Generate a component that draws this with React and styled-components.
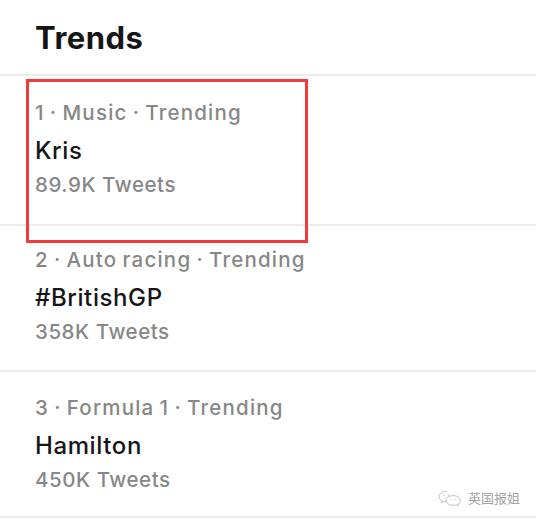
import React from "react";
import styled, { createGlobalStyle } from "styled-components";

const Global = createGlobalStyle`
  html, body { margin: 0; padding: 0; background: #ffffff; }
  body { font-family: Inter, "Noto Sans", "Liberation Sans", sans-serif; -webkit-font-smoothing: antialiased; }
`;

const Page = styled.div`
  width: 536px;
  height: 522px;
  background: #fff;
  overflow: hidden;
  position: relative;
`;

const Header = styled.div`
  height: 76px;
  display: flex;
  align-items: center;
  padding-left: 35px;
  border-bottom: 2px solid #ececec;
  box-sizing: border-box;
`;

const Title = styled.h1`
  margin: 0;
  font-size: 31px;
  font-weight: 700;
  color: #161616;
  letter-spacing: 0.5px;
  line-height: 1;
  padding-top: 1px;
`;

const Row = styled.div`
  position: relative;
  display: flex;
  flex-direction: column;
  padding: ${(p) => p.$top}px 0 0 35px;
  height: ${(p) => p.$h}px;
  box-sizing: border-box;
  border-bottom: 2px solid #ececec;
`;

const Meta = styled.div`
  font-size: 20.5px;
  line-height: 24px;
  font-weight: 500;
  color: #878787;
  letter-spacing: 1.2px;
  word-spacing: -1.5px;
`;

const Name = styled.div`
  margin-top: 12px;
  font-size: 24px;
  line-height: 28px;
  font-weight: 500;
  color: #161616;
  letter-spacing: 0.6px;
`;

const Count = styled.div`
  margin-top: 8px;
  font-size: 20.5px;
  line-height: 24px;
  font-weight: 500;
  color: #878787;
  letter-spacing: 0.55px;
`;

const Highlight = styled.div`
  position: absolute;
  left: 26px;
  top: 3px;
  width: 282px;
  height: 164px;
  border: 3px solid #f03a3c;
  box-sizing: border-box;
  pointer-events: none;
  z-index: 2;
`;

const Watermark = styled.div`
  position: absolute;
  right: 16px;
  bottom: 16px;
  display: flex;
  align-items: center;
  gap: 6px;
  color: #a3a3a3;
  font-family: "Noto Sans CJK SC", sans-serif;
  font-size: 13px;
  line-height: 16px;
`;

const WeChat = () => (
  <svg width="24" height="16" viewBox="0 0 24 16" fill="none" stroke="#bdbdbd" strokeWidth="1">
    <path d="M8.5 1.2c-4 0-7.3 2.4-7.3 5.4 0 1.7 1 3.2 2.7 4.2l-.6 1.9 2.4-1.2c.8.2 1.7.4 2.6.4" />
    <path d="M15.2 5.6c3.9 0 7.1 2.3 7.1 5 0 1.5-.9 2.8-2.3 3.7l.5 1.5-2.1-1c-1 .3-2 .5-3.2.5-3.9 0-7.1-2.2-7.1-4.9s3.2-4.8 7.1-4.8z" />
    <circle cx="5.8" cy="5" r="0.7" fill="#bdbdbd" stroke="none" />
    <circle cx="10.6" cy="5" r="0.7" fill="#bdbdbd" stroke="none" />
    <circle cx="13" cy="9.6" r="0.6" fill="#bdbdbd" stroke="none" />
    <circle cx="17.6" cy="9.6" r="0.6" fill="#bdbdbd" stroke="none" />
  </svg>
);

const trends = [
  { meta: "1 · Music · Trending", name: "Kris", count: "89.9K Tweets", top: 25, h: 150, hl: true },
  { meta: "2 · Auto racing · Trending", name: "#BritishGP", count: "358K Tweets", top: 22, h: 146 },
  { meta: "3 · Formula 1 · Trending", name: "Hamilton", count: "450K Tweets", top: 24, h: 146 },
];

export default function App() {
  return (
    <Page>
      <Global />
      <Header>
        <Title>Trends</Title>
      </Header>
      {trends.map((t) => (
        <Row key={t.name} $top={t.top} $h={t.h}>
          <Meta>{t.meta}</Meta>
          <Name>{t.name}</Name>
          <Count>{t.count}</Count>
          {t.hl && <Highlight />}
        </Row>
      ))}
      <Watermark>
        <WeChat />
        <span>英国报姐</span>
      </Watermark>
    </Page>
  );
}
